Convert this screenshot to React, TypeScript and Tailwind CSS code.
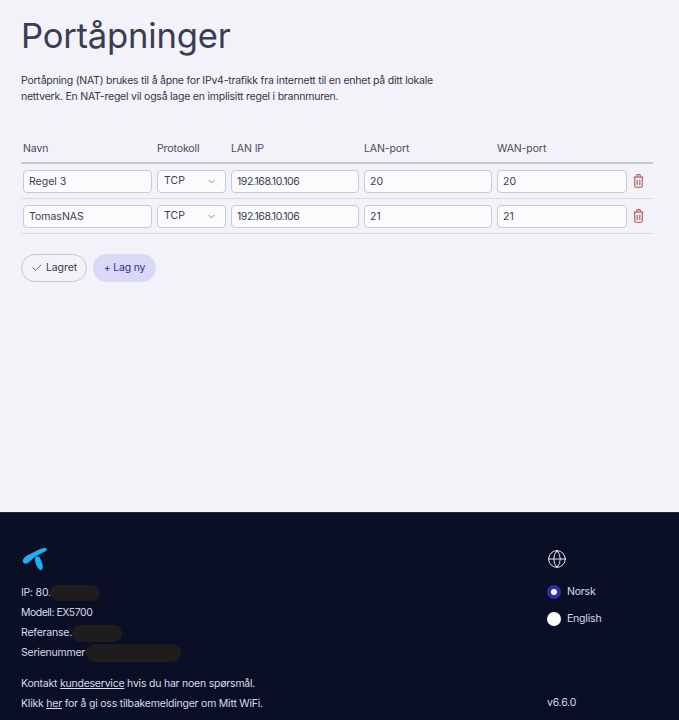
import { ChevronDown, Check, Globe } from 'lucide-react';

const rules = [
  { name: 'Regel 3', lan: '20', wan: '20' },
  { name: 'TomasNAS', lan: '21', wan: '21' },
];

const inputCls =
  'h-[23px] w-full rounded-[4px] border border-[#c9c9d4] bg-[#fbfbfd] pl-[5px] text-[10.5px] text-[#3a3d4d] outline-none';

function TrashIcon() {
  return (
    <svg viewBox="0 0 12 16" fill="none" stroke="#b05a62" strokeWidth="1.3" className="ml-[1px] h-[14px] w-[11px]">
      <path d="M0.5 3.5h11" />
      <path d="M4 3.5V1.5q0-.8.8-.8h2.4q.8 0 .8.8v2" />
      <path d="M1.7 3.5v10.3q0 1.4 1.4 1.4h5.8q1.4 0 1.4-1.4V3.5" />
      <path d="M4.5 6.5v6M7.5 6.5v6" />
    </svg>
  );
}

function Radio({ label, checked }: { label: string; checked?: boolean }) {
  return (
    <div className="flex h-[14px] items-center gap-[6px]">
      {checked ? (
        <span className="flex h-[14px] w-[14px] items-center justify-center rounded-full bg-[#2f2f9e]">
          <span className="h-[6px] w-[6px] rounded-full bg-white" />
        </span>
      ) : (
        <span className="h-[14px] w-[14px] rounded-full bg-white" />
      )}
      <span className="text-[10.5px] tracking-[-0.2px] text-[#d9dbe6]">{label}</span>
    </div>
  );
}

export default function App() {
  return (
    <div className="flex h-[720px] w-[679px] flex-col overflow-hidden bg-[#f2f2f8] font-['Inter',sans-serif]">
      <main className="h-[512px] shrink-0 px-[21px]">
        <h1 className="pt-[15px] text-[34.6px] leading-[40px] tracking-[-0.2px] text-[#3a3d52]">Portåpninger</h1>
        <p className="mt-[18px] w-[430px] text-[10.5px] leading-[16px] tracking-[-0.23px] text-[#33364a]">
          Portåpning (NAT) brukes til å åpne for IPv4-trafikk fra internett til en enhet på ditt lokale nettverk. En
          NAT-regel vil også lage en implisitt regel i brannmuren.
        </p>

        <div className="mt-[30px] w-[632px]">
          <div className="grid h-[29px] grid-cols-[129px_69px_128px_128px_130px] items-center gap-x-[5px] border-b-2 border-[#c6c8d2] px-[2px] pt-[1px] text-[10.5px] tracking-[-0.1px] text-[#4a4c5c]">
            <span>Navn</span>
            <span>Protokoll</span>
            <span>LAN IP</span>
            <span>LAN-port</span>
            <span>WAN-port</span>
          </div>
          {rules.map((r) => (
            <div
              key={r.name}
              className="grid h-[35px] grid-cols-[129px_69px_128px_128px_130px_1fr] items-center gap-x-[5px] border-b border-[#d8d9e2] px-[2px]"
            >
              <input readOnly value={r.name} className={inputCls} />
              <div className="flex h-[23px] items-center justify-between rounded-[4px] border border-[#c9c9d4] bg-[#fbfbfd] pl-[6px] pr-[8px] text-[10.5px] text-[#3a3d4d]">
                TCP
                <ChevronDown size={11} strokeWidth={1.5} className="text-[#55586a]" />
              </div>
              <input readOnly value="192.168.10.106" className={`${inputCls} tracking-[-0.45px]`} />
              <input readOnly value={r.lan} className={inputCls} />
              <input readOnly value={r.wan} className={inputCls} />
              <TrashIcon />
            </div>
          ))}
        </div>

        <div className="mt-[20px] flex gap-[6px]">
          <button className="flex h-[28px] w-[66px] items-center justify-center gap-[3px] rounded-full border border-[#c6c8d2] text-[10.5px] tracking-[-0.1px] text-[#3a3d4d]">
            <Check size={12} strokeWidth={1.5} />
            Lagret
          </button>
          <button className="h-[28px] w-[63px] rounded-full bg-[#d9d9f6] text-[10.5px] tracking-[-0.2px] text-[#30308f]">
            + Lag ny
          </button>
        </div>
      </main>

      <footer className="flex flex-1 justify-between border-t border-[#20243c] bg-[#0a0f26] pl-[21px] pr-[32px] text-[10.5px] tracking-[-0.22px] text-[#d9dbe6]">
        <div className="pt-[33px]">
          <svg viewBox="0 0 26 26" className="h-[26px] w-[26px]">
            <path
              fill="#1cb0f0"
              d="M2.5 17C0.5 14 3 11 7 9C12 7 19 2 23.5 2C26.5 2 26.5 4.5 24 5.5C20 7.5 15.5 9.5 12.5 12C9 15 6 19.5 2.5 17Z"
            />
            <path
              fill="#1cb0f0"
              d="M14.5 11C16 9.5 18.5 10.5 19.5 13C21 16 22.5 20 21.5 23C20.5 25 18.5 24 17 22C15 19 13 14 14.5 11Z"
            />
          </svg>
          <div className="mt-[11px] flex h-[20px] items-center">
            IP: 80.
            <span className="ml-[-1px] h-[16px] w-[50px] rounded-full bg-[#1f1c1e]" />
          </div>
          <div className="flex h-[20px] items-center tracking-[-0.5px]">Modell: EX5700</div>
          <div className="flex h-[20px] items-center">
            Referanse.
            <span className="h-[17px] w-[50px] rounded-full bg-[#1f1c1e]" />
          </div>
          <div className="flex h-[20px] items-center">
            Serienummer
            <span className="ml-[1px] h-[18px] w-[95px] rounded-full bg-[#1f1c1e]" />
          </div>
          <p className="mt-[11px] leading-[20px]">
            Kontakt <u>kundeservice</u> hvis du har noen spørsmål.
          </p>
          <p className="leading-[20px]">
            Klikk <u>her</u> for å gi oss tilbakemeldinger om Mitt WiFi.
          </p>
        </div>
        <div className="flex w-[100px] flex-col pt-[36px]">
          <Globe size={20} strokeWidth={1.2} className="text-[#e6e7ef]" />
          <div className="mt-[16px] flex flex-col gap-[13px]">
            <Radio label="Norsk" checked />
            <Radio label="English" />
          </div>
          <span className="mb-[9px] mt-auto">v6.6.0</span>
        </div>
      </footer>
    </div>
  );
}
